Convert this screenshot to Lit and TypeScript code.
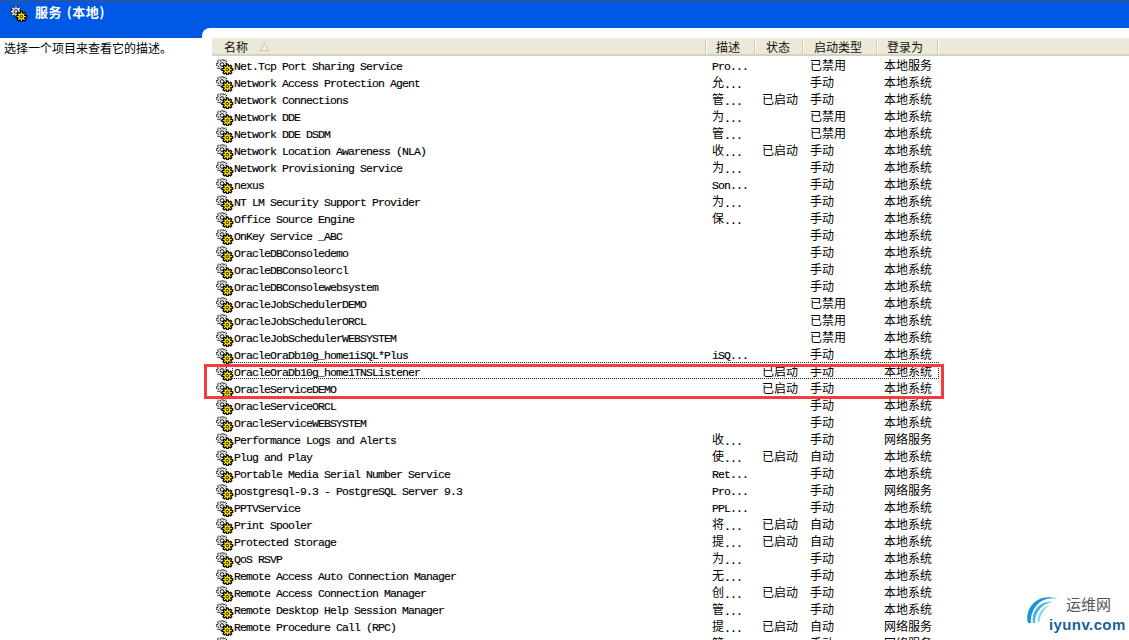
import { LitElement, html, css, svg } from "lit";
import { customElement } from "lit/decorators.js";

type Row = [string, string, string, string, string];
const rows: Row[] = [
  ["Net.Tcp Port Sharing Service", "Pro...", "", "已禁用", "本地服务"],
  ["Network Access Protection Agent", "允...", "", "手动", "本地系统"],
  ["Network Connections", "管...", "已启动", "手动", "本地系统"],
  ["Network DDE", "为...", "", "已禁用", "本地系统"],
  ["Network DDE DSDM", "管...", "", "已禁用", "本地系统"],
  ["Network Location Awareness (NLA)", "收...", "已启动", "手动", "本地系统"],
  ["Network Provisioning Service", "为...", "", "手动", "本地系统"],
  ["nexus", "Son...", "", "手动", "本地系统"],
  ["NT LM Security Support Provider", "为...", "", "手动", "本地系统"],
  ["Office Source Engine", "保...", "", "手动", "本地系统"],
  ["OnKey Service _ABC", "", "", "手动", "本地系统"],
  ["OracleDBConsoledemo", "", "", "手动", "本地系统"],
  ["OracleDBConsoleorcl", "", "", "手动", "本地系统"],
  ["OracleDBConsolewebsystem", "", "", "手动", "本地系统"],
  ["OracleJobSchedulerDEMO", "", "", "已禁用", "本地系统"],
  ["OracleJobSchedulerORCL", "", "", "已禁用", "本地系统"],
  ["OracleJobSchedulerWEBSYSTEM", "", "", "已禁用", "本地系统"],
  ["OracleOraDb10g_home1iSQL*Plus", "iSQ...", "", "手动", "本地系统"],
  ["OracleOraDb10g_home1TNSListener", "", "已启动", "手动", "本地系统"],
  ["OracleServiceDEMO", "", "已启动", "手动", "本地系统"],
  ["OracleServiceORCL", "", "", "手动", "本地系统"],
  ["OracleServiceWEBSYSTEM", "", "", "手动", "本地系统"],
  ["Performance Logs and Alerts", "收...", "", "手动", "网络服务"],
  ["Plug and Play", "使...", "已启动", "自动", "本地系统"],
  ["Portable Media Serial Number Service", "Ret...", "", "手动", "本地系统"],
  ["postgresql-9.3 - PostgreSQL Server 9.3", "Pro...", "", "手动", "网络服务"],
  ["PPTVService", "PPL...", "", "手动", "本地系统"],
  ["Print Spooler", "将...", "已启动", "自动", "本地系统"],
  ["Protected Storage", "提...", "已启动", "自动", "本地系统"],
  ["QoS RSVP", "为...", "", "手动", "本地系统"],
  ["Remote Access Auto Connection Manager", "无...", "", "手动", "本地系统"],
  ["Remote Access Connection Manager", "创...", "已启动", "手动", "本地系统"],
  ["Remote Desktop Help Session Manager", "管...", "", "手动", "本地系统"],
  ["Remote Procedure Call (RPC)", "提...", "已启动", "自动", "网络服务"],
  ["Remote Procedure Call (RPC) Locator", "管...", "", "手动", "网络服务"],
];

const gearPath = (cx: number, cy: number, ro: number, ri: number, n: number) => {
  const pts: string[] = [];
  const step = (Math.PI * 2) / n;
  for (let i = 0; i < n; i++) {
    const a = i * step;
    const add = (r: number, o: number) =>
      pts.push(`${(cx + r * Math.cos(a + o)).toFixed(2)} ${(cy + r * Math.sin(a + o)).toFixed(2)}`);
    add(ri, -step * 0.42);
    add(ro, -step * 0.2);
    add(ro, step * 0.2);
    add(ri, step * 0.42);
  }
  return "M" + pts.join("L") + "Z";
};

const icon = html`<svg class="ico" width="18" height="16" viewBox="0 0 18 16">
  ${svg`<path d=${gearPath(6, 5.5, 5.7, 3.9, 8)} fill="#e4e4e4" stroke="#000" stroke-width="1" stroke-dasharray="1.8 .8"></path>
  <circle cx="6" cy="5.5" r="1.8" fill="#fff" stroke="#111" stroke-width="1"></circle>
  <path d=${gearPath(11.4, 10.6, 5.4, 3.6, 8)} fill="#ffea00" stroke="#000" stroke-width="1.2"></path>
  <circle cx="11.4" cy="10.6" r="1.3" fill="#ffea00" stroke="#000" stroke-width=".9"></circle>`}
</svg>`;

@customElement("app-root")
export class AppRoot extends LitElement {
  static styles = css`
    :host { display: block; width: 1129px; height: 640px; overflow: hidden; background: #fff; position: relative;
      font-family: "Liberation Mono", "Noto Sans CJK SC", monospace; color: #000; }
    .top { height: 28px; background: #0058e6; border-top: 1px solid #44546a; box-sizing: border-box; display: flex; align-items: flex-start; gap: 7px; padding: 0 0 0 10px; color: #fff; }
    .top .ico { margin-top: 5px; }
    .title { font: bold 13px/22px "Noto Sans CJK SC", sans-serif; letter-spacing: 0.6px; word-spacing: 1px; }
    .body { display: grid; grid-template-columns: 202px 1fr; height: 612px; }
    .left { display: flex; flex-direction: column; }
    .leftband { height: 10px; background: #0058e6; flex: none; }
    .desc { font: 12px "Noto Sans CJK SC", sans-serif; padding: 2px 0 0 4px; line-height: 16px; }
    .rightwrap { background: #0058e6; }
    .right { background: #fff; border-top-left-radius: 8px; height: 100%; padding: 10px 0 0 10px; box-sizing: border-box; overflow: hidden; }
    .head { display: grid; grid-template-columns: 494px 49px 48px 74px 61px 1fr; height: 18px; background: #ece9d8; border-bottom: 2px solid #d6d2c2; box-sizing: border-box; font: 12px "Noto Sans CJK SC", sans-serif; color: #111; }
    .hc { display: flex; align-items: center; padding-left: 10px; border-right: 1px solid #cfccba; box-shadow: 1px 0 0 #fff; box-sizing: border-box; margin: 2px 0; line-height: 14px; }
    .hc.first { padding-left: 12px; gap: 12px; }
    .hc.p11 { padding-left: 11px; }
    .hc.last { border-right: 0; box-shadow: none; }
    .row { position: relative; display: grid; grid-template-columns: 500px 50px 48px 74px 1fr; height: 17px; align-items: center; white-space: nowrap; font-size: 11.5px; letter-spacing: -0.9px; line-height: 17px; -webkit-text-stroke: 0.15px #000; }
    .name { display: flex; align-items: center; padding-left: 4px; }
    .ico { flex: none; }
    .name .ico { margin-top: 2px; }
    .cjk { font: 12px/17px "Noto Sans CJK SC", sans-serif; letter-spacing: 0; vertical-align: 1px; -webkit-text-stroke: 0; }
    .rows { width: 727px; }
    .focus::after { content: ""; position: absolute; left: 20px; right: 0; top: 0; bottom: 0; border: 1px dotted #222; }
    .mark { position: absolute; left: 204px; top: 364px; width: 740px; height: 35px; box-sizing: border-box; border: 3px solid #f43b42; pointer-events: none; }
    .logo { position: absolute; left: 1024px; top: 590px; width: 105px; height: 50px; }
    .logo .cn { position: absolute; left: 42px; top: 4px; font: 15px "Noto Sans CJK SC", sans-serif; color: #555; white-space: nowrap; line-height: 20px; }
    .logo .en { position: absolute; left: 25px; top: 26px; font: bold 15px "Liberation Sans", sans-serif; letter-spacing: 0.4px; color: #1a5f94; white-space: nowrap; line-height: 18px; }
    .logo svg { position: absolute; left: 0; top: 0; }
  `;

  private t(s: string) {
    return s.split(/([\u3000-\u9fff]+)/).map((p, i) => (i % 2 ? html`<span class="cjk">${p}</span>` : p));
  }

  render() {
    return html`
      <div class="top">
        ${icon}
        <span class="title">服务 (本地)</span>
      </div>
      <div class="body">
        <div class="left">
          <div class="leftband"></div>
          <div class="desc">选择一个项目来查看它的描述。</div>
        </div>
        <div class="rightwrap">
          <div class="right">
            <div class="head">
              <div class="hc first"><span>名称</span><svg width="9" height="8" viewBox="0 0 9 8"><path d="M4.5 .5 L8.5 7.5 H.5 Z" fill="#f4f3ec" stroke="#c5c2b2"/></svg></div>
              <div class="hc">描述</div>
              <div class="hc p11">状态</div>
              <div class="hc p11">启动类型</div>
              <div class="hc">登录为</div>
              <div class="hc last"></div>
            </div>
            <div class="rows">
              ${rows.map(
                (r, i) => html`<div class="row ${i === 18 ? "focus" : ""}">
                  <div class="name">${icon}<span>${r[0]}</span></div>
                  <div>${this.t(r[1])}</div>
                  <div>${this.t(r[2])}</div>
                  <div>${this.t(r[3])}</div>
                  <div>${this.t(r[4])}</div>
                </div>`
              )}
            </div>
          </div>
        </div>
      </div>
      <div class="mark"></div>
      <div class="logo">
        <svg width="50" height="50" viewBox="0 0 50 50">
          <path d="M4 33 C0 18 14 2 34 9 C18 5 6 18 7 33 Z" fill="#1b95d8"/>
          <path d="M9 33 C7 21 16 10 30 12 C19 12 11 22 11 33 Z" fill="#45b4ea"/>
          <path d="M14 32 C13 24 18 17 26 15 C20 19 16 25 15.5 32 Z" fill="#8ad2f2"/>
        </svg>
        <span class="cn">运维网</span>
        <span class="en">iyunv.com</span>
      </div>
    `;
  }
}
